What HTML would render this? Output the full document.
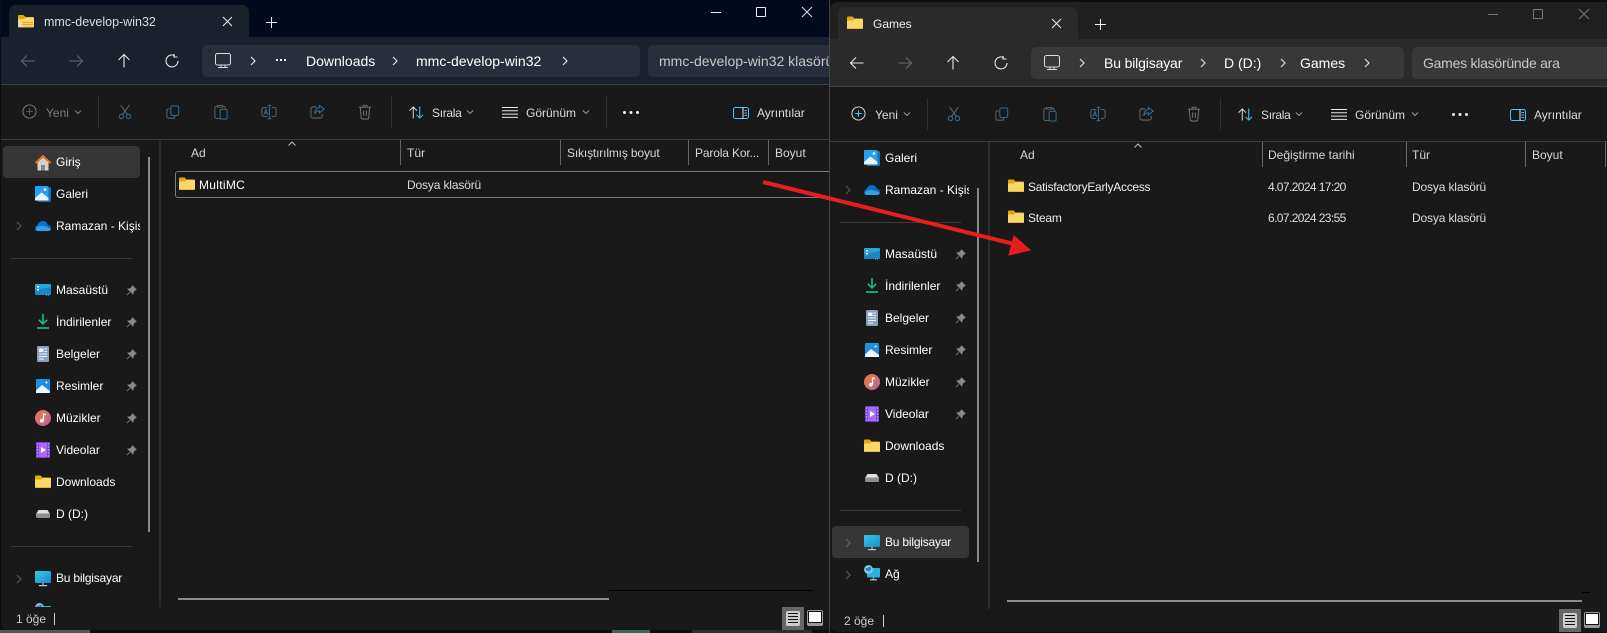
<!DOCTYPE html>
<html><head><meta charset="utf-8"><style>
html,body{margin:0;padding:0;background:#0c0f12}
body{position:relative;width:1607px;height:633px;overflow:hidden;font-family:"Liberation Sans",sans-serif;font-size:12px;color:#fff}
.w{position:absolute;overflow:hidden;background:#191919}
.a{position:absolute}
.t{position:absolute;white-space:nowrap;line-height:16px;height:16px}
.i{position:absolute;overflow:visible}
.n{font-size:14px}
.h{color:#d6d6d6}
.d{color:#ddd}
.g{color:#7c7c7c}
.k{letter-spacing:-.15px}
.dt{letter-spacing:-.6px}
</style></head><body>
<svg width="0" height="0" style="position:absolute"><defs>
<symbol id="back" viewBox="0 0 16 16"><path d="M14.5 8H1.5M7 2.5L1.5 8L7 13.5" fill="none" stroke="currentColor" stroke-width="1.1"/></symbol>
<symbol id="fwd" viewBox="0 0 16 16"><path d="M1.5 8H14.5M9 2.5L14.5 8L9 13.5" fill="none" stroke="currentColor" stroke-width="1.1"/></symbol>
<symbol id="up" viewBox="0 0 16 16"><path d="M8 14.5V1.5M2.5 7L8 1.5L13.5 7" fill="none" stroke="currentColor" stroke-width="1.1"/></symbol>
<symbol id="ref" viewBox="0 0 16 16"><path d="M10.8 2.6A6 6 0 1 0 14 8M10 1V4H13.5" fill="none" stroke="currentColor" stroke-width="1.1"/></symbol>
<symbol id="mon" viewBox="0 0 16 16"><rect x=".5" y=".5" width="15" height="11.5" rx="2" fill="none" stroke="currentColor" stroke-width="1"/><path d="M3 14.5H13M6 12.5V14.5M10 12.5V14.5" stroke="currentColor" stroke-width="1"/></symbol>
<symbol id="chev" viewBox="0 0 8 10"><path d="M2 1L6 5L2 9" fill="none" stroke="currentColor" stroke-width="1.2"/></symbol>
<symbol id="cd" viewBox="0 0 8 6"><path d="M1 1.5L4 4.5L7 1.5" fill="none" stroke="currentColor" stroke-width="1"/></symbol>
<symbol id="plus" viewBox="0 0 16 16"><circle cx="8" cy="8" r="7" fill="none" stroke="currentColor" stroke-width="1"/><path d="M4.5 8H11.5M8 4.5V11.5" stroke="var(--ac)" stroke-width="1.1"/></symbol>
<symbol id="cut" viewBox="0 0 16 18"><path d="M3 1L10.5 11.5M13 1L5.5 11.5" stroke="#666" stroke-width="1.1" fill="none"/><circle cx="4" cy="14" r="2.5" fill="none" stroke="#2f6a94" stroke-width="1.2"/><circle cx="12" cy="14" r="2.5" fill="none" stroke="#2f6a94" stroke-width="1.2"/></symbol>
<symbol id="copy" viewBox="0 0 16 16"><path d="M4 4.5H2.5A1.5 1.5 0 0 0 1 6V13A2 2 0 0 0 3 15H8.5A1.5 1.5 0 0 0 10 13.5V12.500" fill="none" stroke="#666" stroke-width="1.1"/><rect x="5.500" y="1" width="9" height="11" rx="2" fill="none" stroke="#2f6a94" stroke-width="1.2"/></symbol>
<symbol id="paste" viewBox="0 0 16 18"><path d="M7 16.500H3A2 2 0 0 1 1 14.500V4.500A2 2 0 0 1 3 2.500H4M10 2.500H11A2 2 0 0 1 13 4.500V5.500M4 1.500H10V3.500H4Z" fill="none" stroke="#666" stroke-width="1.1"/><rect x="7" y="6" width="8" height="11" rx="1.500" fill="none" stroke="#2f6a94" stroke-width="1.2"/></symbol>
<symbol id="ren" viewBox="0 0 18 16"><path d="M7 3H3A2 2 0 0 0 1 5V11A2 2 0 0 0 3 13H7M12 3H15A2 2 0 0 1 17 5V11A2 2 0 0 1 15 13H12" fill="none" stroke="#666" stroke-width="1.1"/><path d="M7.500 .5H11.500M9.500 .5V15.500M7.500 15.500H11.500" fill="none" stroke="#2f6a94" stroke-width="1.2"/><path d="M3.300 11L5.500 5L7.700 11M4.100 9H6.900" fill="none" stroke="#2f6a94" stroke-width="1.2"/></symbol>
<symbol id="share" viewBox="0 0 16 16"><path d="M7 3H3A2 2 0 0 0 1 5V13A2 2 0 0 0 3 15H11A2 2 0 0 0 13 13V10.500" fill="none" stroke="#666" stroke-width="1.1"/><path d="M10 1.500L15 5.500L10 9.500V7.200C7.500 7.200 6 8.500 5 10.500C5 7 7 4 10 3.800Z" fill="none" stroke="#2f6a94" stroke-width="1.2"/></symbol>
<symbol id="del" viewBox="0 0 14 17"><path d="M.5 3.500H13.500M5 3.500V1.500H9V3.500M2 3.500L3 14.500A1.500 1.500 0 0 0 4.500 16H9.500A1.500 1.500 0 0 0 11 14.500L12 3.500M5.500 7V12.500M8.500 7V12.500" fill="none" stroke="#707070" stroke-width="1.1"/></symbol>
<symbol id="sort" viewBox="0 0 17 14"><path d="M5 13.500V1M1 5L5 1L9 5" fill="none" stroke="#e6e6e6"/><path d="M12 .5V13M8.500 9.500L12 13L15.500 9.500" fill="none" stroke="#4cc2ff" stroke-width="1.100"/></symbol>
<symbol id="view" viewBox="0 0 16 11"><path d="M0 .5H16M0 3.800H16M0 7.100H16M0 10.400H16" stroke="#e6e6e6" stroke-width="1"/></symbol>
<symbol id="det" viewBox="0 0 16 12"><rect x=".5" y=".5" width="15" height="11" rx="2" fill="none" stroke="#4cc2ff"/><path d="M10 .5V11.500" stroke="#e6e6e6"/><path d="M11.500 3.500H14M11.500 6H14M11.500 8.500H14" stroke="#4cc2ff"/></symbol>
<symbol id="pin" viewBox="0 0 12 12"><path d="M7 .8L11.200 5L9.800 5.600L8 7.500L7.600 10L2 4.400L4.500 4L6.400 2.200ZM4 8L1 11" fill="#8a8a8a" stroke="#8a8a8a" stroke-width=".8"/></symbol>
<symbol id="fold" viewBox="0 0 16 13"><path d="M0 1.500A1 1 0 0 1 1 .5H5.500L7.500 2.500H15A1 1 0 0 1 16 3.500V7H0Z" fill="#e6a70e"/><path d="M0 4.500H6L7.500 3H15A1 1 0 0 1 16 4V12A1 1 0 0 1 15 13H1A1 1 0 0 1 0 12Z" fill="#fbd768"/><path d="M0 12H16V12A1 1 0 0 1 15 13H1A1 1 0 0 1 0 12Z" fill="#e9b73e"/></symbol>
<symbol id="home" viewBox="0 0 16 16"><path d="M2.500 7L8 2.500L13.500 7V15.500H2.500Z" fill="#d5d1cd"/><rect x="6" y="10" width="4" height="5.500" fill="#8c8782"/><path d="M.5 8L8 1L15.500 8" fill="none" stroke="#e9701c" stroke-width="2"/></symbol>
<symbol id="gal" viewBox="0 0 16 16"><rect x="2.500" y="1" width="13.500" height="15" rx="1" fill="#1a6fb5"/><rect x="0" y="0" width="13.500" height="14.500" rx="1" fill="#2aa0ea"/><path d="M0 12L6.500 6.500L13.500 12V14.500H0Z" fill="#e8f5fd"/><circle cx="10" cy="3.500" r="1.300" fill="#fff"/></symbol>
<symbol id="cloud" viewBox="0 0 16 10"><path d="M3 10A3 3 0 0 1 2.600 4.100C3.500 1.500 5.500 0 8 0C10.500 0 12.200 1.500 12.800 4A3 3 0 0 1 13 10Z" fill="#0f6fc6"/><path d="M3 10C1.500 10 .5 9 .5 8C1 6.500 3 5 6.500 5C10 5 13 6 16 8C15.600 9.200 14.500 10 13 10Z" fill="#2ea3ec"/></symbol>
<symbol id="desk" viewBox="0 0 16 12"><path d="M1 0H15A1 1 0 0 1 16 1V10A1 1 0 0 1 15 11H1A1 1 0 0 1 0 10V1A1 1 0 0 1 1 0Z" fill="#26a9d8"/><path d="M0 6L16 3V10A1 1 0 0 1 15 11H1A1 1 0 0 1 0 10Z" fill="#1a86c4"/><rect x="2" y="2" width="2" height="1.500" fill="#fff"/><rect x="2" y="5" width="2" height="1.500" fill="#fff"/><rect x="11" y="10.600" width="1" height="1" fill="#aaa"/><rect x="13" y="10.600" width="1" height="1" fill="#aaa"/></symbol>
<symbol id="dl" viewBox="0 0 12 15"><path d="M6 0V9.500M1.800 5.800L6 10L10.200 5.800" fill="none" stroke="#1cc28c" stroke-width="1.500"/><path d="M0 14H12" stroke="#1cc28c" stroke-width="1.600"/></symbol>
<symbol id="doc" viewBox="0 0 12 16"><rect width="12" height="16" rx="1.500" fill="#8aa3bd"/><rect x="2" y="2.500" width="4.500" height="3.500" fill="#f2f5f8"/><path d="M7.500 3H10M7.500 5.500H10M2 8H10M2 10.500H10M2 13H7" stroke="#f2f5f8"/></symbol>
<symbol id="pic" viewBox="0 0 14 14"><rect width="14" height="14" rx="1" fill="#1c8fe0"/><path d="M0 11.500L6 6L14 12V14H0Z" fill="#eef7fd"/><circle cx="10.500" cy="3.500" r="1" fill="#fff"/></symbol>
<symbol id="mus" viewBox="0 0 16 16"><defs><linearGradient id="mg" x1="0" y1="0" x2="1" y2="1"><stop offset="0" stop-color="#ee7b3c"/><stop offset="1" stop-color="#b8609c"/></linearGradient></defs><circle cx="8" cy="8" r="8" fill="url(#mg)"/><path d="M8.500 3.500V10.500" stroke="#fff" stroke-width="1.300"/><path d="M8.500 3.500L11 5" stroke="#fff" stroke-width="1.300"/><circle cx="6.800" cy="10.800" r="1.900" fill="#fff"/></symbol>
<symbol id="vid" viewBox="0 0 14 16"><rect width="14" height="16" rx="1" fill="#7a3fd8"/><rect x="3" y="1" width="8" height="14" fill="#a66bf0"/><path d="M5 5L10 8L5 11Z" fill="#fff"/><path d="M.8 2H2.200M.8 5H2.200M.8 8H2.200M.8 11H2.200M.8 14H2.200M11.800 2H13.200M11.800 5H13.200M11.800 8H13.200M11.800 11H13.200M11.800 14H13.200" stroke="#e7dafc" stroke-width="1"/></symbol>
<symbol id="drv" viewBox="0 0 14 8"><path d="M2.500 0H11.500L14 4H0Z" fill="#e0e0e0"/><rect y="3.500" width="14" height="4.500" rx="1" fill="#8d8d8d"/><rect x="2.500" y="5.200" width="1.400" height="1.200" fill="#3bd26a"/></symbol>
<symbol id="pc" viewBox="0 0 16 16"><defs><linearGradient id="pg" x1="0" y1="0" x2="1" y2="1"><stop offset="0" stop-color="#36c7e6"/><stop offset="1" stop-color="#1490c8"/></linearGradient></defs><rect width="16" height="12" rx="1" fill="url(#pg)"/><rect x="7.200" y="12" width="1.600" height="2.500" fill="#9a9a9a"/><rect x="4" y="14" width="8" height="1.200" fill="#c6c6c6"/></symbol>
<symbol id="net" viewBox="0 0 16 16"><rect x="3" y="3" width="13" height="9.500" rx="1" fill="#25b4e0"/><rect x="8.700" y="12.500" width="1.400" height="2" fill="#9a9a9a"/><rect x="6" y="14.200" width="7" height="1.200" fill="#c6c6c6"/><circle cx="4.500" cy="4.500" r="4.500" fill="#7fc3ea"/><path d="M1.500 2.500C3 4 5 2 6.500 1.500C7 3 8 5 5 6C3 6.500 1.500 5 1.500 2.500Z" fill="#2b80c0"/></symbol>
</defs></svg>

<!-- desktop strip -->
<div class="a" style="left:0;top:630px;width:90px;height:3px;background:#555"></div>
<div class="a" style="left:612px;top:630px;width:38px;height:3px;background:#2f6b5b"></div>
<div class="a" style="left:692px;top:630px;width:120px;height:3px;background:#2e2e28"></div>

<!-- WINDOW 1 -->
<div class="w" style="left:1px;top:0;width:829px;height:630px;border-radius:0 0 0 8px;background:#191919">
<div style="position:absolute;left:-1px;top:0;width:830px;height:630px">
<div class="a" style="left:0;top:0;width:830px;height:37px;background:#010a1f"></div>
<div class="a" style="left:9px;top:5px;width:240px;height:32px;background:#1a202c;border-radius:7px 7px 0 0"></div>
<svg class="i" style="left:18px;top:14px" width="16" height="14"><use href="#fold"/><rect x="1" y="8" width="3" height="5" fill="#ddd"/><rect x="4" y="8" width="11" height="1" fill="#d4a93a"/><rect x="4" y="10" width="11" height="1" fill="#d4a93a"/></svg>
<div class="t d" style="left:44px;top:14px;font-size:12.5px">mmc-develop-win32</div>
<svg class="i" style="left:222px;top:16px" width="11" height="11"><path d="M1 1L10 10M10 1L1 10" stroke="#eee" stroke-width="1"/></svg>
<svg class="i" style="left:266px;top:17px" width="11" height="11"><path d="M0 5.500H11M5.500 0V11" stroke="#eee" stroke-width="1"/></svg>
<div class="a" style="left:711px;top:12px;width:10px;height:1px;background:#eee"></div>
<div class="a" style="left:756px;top:7px;width:8px;height:8px;border:1px solid #eee;border-radius:1px"></div>
<svg class="i" style="left:802px;top:7px" width="10" height="10"><path d="M0 0L10 10M10 0L0 10" stroke="#ddd" stroke-width="1"/></svg>
<div class="a" style="left:0;top:37px;width:830px;height:47px;background:#1a202c"></div>
<div class="a" style="left:0;top:84px;width:830px;height:1px;background:#3d3d3d"></div>
<svg class="i" style="left:20px;top:53px;color:#5e6670" width="16" height="16"><use href="#back"/></svg>
<svg class="i" style="left:68px;top:53px;color:#5e6670" width="16" height="16"><use href="#fwd"/></svg>
<svg class="i" style="left:116px;top:53px;color:#e8e8e8" width="16" height="16"><use href="#up"/></svg>
<svg class="i" style="left:164px;top:53px;color:#e8e8e8" width="16" height="16"><use href="#ref"/></svg>
<div class="a" style="left:202px;top:45px;width:438px;height:32px;background:#282e3a;border-radius:5px"></div>
<svg class="i" style="left:215px;top:53px;color:#ddd" width="16" height="16"><use href="#mon"/></svg>
<svg class="i" style="left:249px;top:56px;color:#ddd" width="8" height="10"><use href="#chev"/></svg>
<div class="a" style="left:276px;top:59px;width:2px;height:2px;background:#eee;box-shadow:4px 0 #eee,8px 0 #eee"></div>
<div class="t n" style="left:306px;top:53px">Downloads</div>
<svg class="i" style="left:391px;top:56px;color:#ddd" width="8" height="10"><use href="#chev"/></svg>
<div class="t n" style="left:416px;top:53px">mmc-develop-win32</div>
<svg class="i" style="left:561px;top:56px;color:#ddd" width="8" height="10"><use href="#chev"/></svg>
<div class="a" style="left:648px;top:45px;width:190px;height:32px;background:#282e3a;border-radius:5px"></div>
<div class="t n" style="left:659px;top:53px;color:#c8c8c8">mmc-develop-win32 klasörü</div>
<!-- command bar -->
<svg class="i" style="left:22px;top:104px;color:#7a7a7a;--ac:#3a5f7d" width="15" height="15"><use href="#plus"/></svg>
<div class="t g" style="left:46px;top:105px">Yeni</div>
<svg class="i" style="left:74px;top:109px;color:#7a7a7a" width="8" height="6"><use href="#cd"/></svg>
<div class="a" style="left:98px;top:96px;width:1px;height:32px;background:#303030"></div>
<svg class="i" style="left:118px;top:104px" width="14" height="16"><use href="#cut"/></svg>
<svg class="i" style="left:166px;top:105px" width="14" height="14"><use href="#copy"/></svg>
<svg class="i" style="left:214px;top:104px" width="14" height="16"><use href="#paste"/></svg>
<svg class="i" style="left:261px;top:104px" width="16" height="16"><use href="#ren"/></svg>
<svg class="i" style="left:310px;top:104px" width="15" height="15"><use href="#share"/></svg>
<svg class="i" style="left:358px;top:104px" width="14" height="16"><use href="#del"/></svg>
<div class="a" style="left:391px;top:96px;width:1px;height:32px;background:#303030"></div>
<svg class="i" style="left:408px;top:106px" width="17" height="13"><use href="#sort"/></svg>
<div class="t d" style="left:432px;top:105px;letter-spacing:-.3px">Sırala</div>
<svg class="i" style="left:466px;top:109px;color:#999" width="8" height="6"><use href="#cd"/></svg>
<svg class="i" style="left:502px;top:107px" width="16" height="11"><use href="#view"/></svg>
<div class="t d" style="left:526px;top:105px">Görünüm</div>
<svg class="i" style="left:582px;top:109px;color:#999" width="8" height="6"><use href="#cd"/></svg>
<div class="a" style="left:606px;top:96px;width:1px;height:32px;background:#303030"></div>
<div class="a" style="left:623px;top:111px;width:3px;height:3px;border-radius:2px;background:#eee;box-shadow:6.500px 0 #eee,13px 0 #eee"></div>
<svg class="i" style="left:733px;top:107px" width="16" height="12"><use href="#det"/></svg>
<div class="t d" style="left:757px;top:105px">Ayrıntılar</div>
<div class="a" style="left:0;top:139px;width:830px;height:1px;background:#3d3d3d"></div>
<!-- sidebar -->
<div class="a" style="left:3px;top:146px;width:137px;height:32px;background:#363636;border-radius:4px"></div>
<svg class="i" style="left:35px;top:155px" width="16" height="16"><use href="#home"/></svg><div class="t" style="left:56px;top:154px">Giriş</div>
<svg class="i" style="left:35px;top:186px" width="16" height="16"><use href="#gal"/></svg><div class="t" style="left:56px;top:186px">Galeri</div>
<svg class="i" style="left:15px;top:221px;color:#555" width="8" height="10"><use href="#chev"/></svg>
<svg class="i" style="left:35px;top:221px" width="16" height="10"><use href="#cloud"/></svg><div class="t" style="left:56px;top:218px;width:84px;overflow:hidden">Ramazan - Kişisel</div>
<div class="a" style="left:11px;top:258px;width:121px;height:1px;background:#3a3a3a"></div>
<svg class="i" style="left:35px;top:284px" width="16" height="12"><use href="#desk"/></svg><div class="t" style="left:56px;top:282px">Masaüstü</div><svg class="i" style="left:126px;top:285px" width="11" height="11"><use href="#pin"/></svg>
<svg class="i" style="left:37px;top:314px" width="12" height="15"><use href="#dl"/></svg><div class="t" style="left:56px;top:314px">İndirilenler</div><svg class="i" style="left:126px;top:317px" width="11" height="11"><use href="#pin"/></svg>
<svg class="i" style="left:37px;top:346px" width="12" height="16"><use href="#doc"/></svg><div class="t" style="left:56px;top:346px">Belgeler</div><svg class="i" style="left:126px;top:349px" width="11" height="11"><use href="#pin"/></svg>
<svg class="i" style="left:36px;top:379px" width="14" height="14"><use href="#pic"/></svg><div class="t" style="left:56px;top:378px">Resimler</div><svg class="i" style="left:126px;top:381px" width="11" height="11"><use href="#pin"/></svg>
<svg class="i" style="left:35px;top:410px" width="16" height="16"><use href="#mus"/></svg><div class="t" style="left:56px;top:410px">Müzikler</div><svg class="i" style="left:126px;top:413px" width="11" height="11"><use href="#pin"/></svg>
<svg class="i" style="left:36px;top:442px" width="14" height="16"><use href="#vid"/></svg><div class="t" style="left:56px;top:442px">Videolar</div><svg class="i" style="left:126px;top:445px" width="11" height="11"><use href="#pin"/></svg>
<svg class="i" style="left:35px;top:475px" width="16" height="13"><use href="#fold"/></svg><div class="t" style="left:56px;top:474px">Downloads</div>
<svg class="i" style="left:36px;top:510px" width="14" height="8"><use href="#drv"/></svg><div class="t" style="left:56px;top:506px">D (D:)</div>
<div class="a" style="left:11px;top:546px;width:121px;height:1px;background:#3a3a3a"></div>
<svg class="i" style="left:15px;top:574px;color:#555" width="8" height="10"><use href="#chev"/></svg>
<svg class="i" style="left:35px;top:571px" width="16" height="16"><use href="#pc"/></svg><div class="t" style="left:56px;top:570px;letter-spacing:-.2px">Bu bilgisayar</div>
<svg class="i" style="left:35px;top:603px" width="16" height="16"><use href="#net"/></svg>
<div class="a" style="left:148px;top:157px;width:2px;height:375px;background:#8a8a8a"></div>
<div class="a" style="left:159px;top:140px;width:2px;height:467px;background:#2c2c2c"></div>
<!-- list -->
<div class="a" style="left:288px;top:141px"><svg width="8" height="5" style="display:block"><path d="M.5 4.500L4 1L7.500 4.500" fill="none" stroke="#bbb"/></svg></div>
<div class="t h" style="left:191px;top:145px">Ad</div>
<div class="a" style="left:400px;top:140px;width:1px;height:25px;background:#666"></div>
<div class="t h" style="left:407px;top:145px">Tür</div>
<div class="a" style="left:560px;top:140px;width:1px;height:25px;background:#666"></div>
<div class="t h k" style="left:567px;top:145px">Sıkıştırılmış boyut</div>
<div class="a" style="left:688px;top:140px;width:1px;height:25px;background:#666"></div>
<div class="t h k" style="left:695px;top:145px">Parola Kor...</div>
<div class="a" style="left:768px;top:140px;width:1px;height:25px;background:#666"></div>
<div class="t h" style="left:775px;top:145px">Boyut</div>
<div class="a" style="left:175px;top:171px;width:670px;height:25px;border:1px solid #7d7d7d;border-radius:3px"></div>
<svg class="i" style="left:179px;top:177px" width="16" height="13"><use href="#fold"/></svg>
<div class="t" style="left:199px;top:177px;letter-spacing:.3px">MultiMC</div>
<div class="t d k" style="left:407px;top:177px">Dosya klasörü</div>
<!-- hscroll -->
<div class="a" style="left:178px;top:598px;width:431px;height:2px;background:#8c8c8c"></div>
<div class="a" style="left:609px;top:590px;width:204px;height:1px;background:#000"></div>
<!-- status -->
<div class="a" style="left:0;top:607px;width:830px;height:23px;background:#191919"></div>
<div class="t" style="left:16px;top:611px;color:#ccc">1 öğe</div>
<div class="a" style="left:54px;top:613px;width:1px;height:12px;background:#ccc"></div>
<div class="a" style="left:782px;top:607px;width:22px;height:23px;background:#666"></div>
<div class="a" style="left:786px;top:611px;width:14px;height:15px;background:#ccc;border-radius:2px"></div>
<svg class="i" style="left:788px;top:613px" width="10" height="11"><path d="M0 .5H10M0 3.500H10M0 6.500H10M0 9.500H10" stroke="#111"/></svg>
<div class="a" style="left:807px;top:610px;width:16px;height:16px;background:#999;border-radius:2px"></div>
<div class="a" style="left:809px;top:612px;width:12px;height:10px;background:#fff;outline:1px solid #111"></div>
</div></div>
<div class="a" style="left:829px;top:0;width:1px;height:633px;background:#444"></div>

<!-- WINDOW 2 -->
<div class="w" style="left:830px;top:2px;width:777px;height:630px;border-radius:8px 0 0 8px;background:#191919">
<div style="position:absolute;left:-1px;top:0;width:778px;height:630px">
<div class="a" style="left:0;top:0;width:778px;height:37px;background:#202020"></div>
<div class="a" style="left:9px;top:5px;width:240px;height:32px;background:#2a2a2a;border-radius:7px 7px 0 0"></div>
<svg class="i" style="left:18px;top:14px" width="16" height="13"><use href="#fold"/></svg>
<div class="t" style="left:44px;top:14px;font-size:12px;color:#eee">Games</div>
<svg class="i" style="left:222px;top:16px" width="11" height="11"><path d="M1 1L10 10M10 1L1 10" stroke="#eee" stroke-width="1"/></svg>
<svg class="i" style="left:266px;top:17px" width="11" height="11"><path d="M0 5.500H11M5.500 0V11" stroke="#eee" stroke-width="1"/></svg>
<div class="a" style="left:659px;top:12px;width:10px;height:1px;background:#777"></div>
<div class="a" style="left:704px;top:7px;width:8px;height:8px;border:1px solid #777;border-radius:1px"></div>
<svg class="i" style="left:750px;top:7px" width="10" height="10"><path d="M0 0L10 10M10 0L0 10" stroke="#777" stroke-width="1"/></svg>
<div class="a" style="left:0;top:37px;width:778px;height:47px;background:#2a2a2a"></div>
<div class="a" style="left:0;top:84px;width:778px;height:1px;background:#444"></div>
<svg class="i" style="left:20px;top:53px;color:#e8e8e8" width="16" height="16"><use href="#back"/></svg>
<svg class="i" style="left:68px;top:53px;color:#6a6a6a" width="16" height="16"><use href="#fwd"/></svg>
<svg class="i" style="left:116px;top:53px;color:#e8e8e8" width="16" height="16"><use href="#up"/></svg>
<svg class="i" style="left:164px;top:53px;color:#e8e8e8" width="16" height="16"><use href="#ref"/></svg>
<div class="a" style="left:202px;top:45px;width:373px;height:32px;background:#383838;border-radius:5px"></div>
<svg class="i" style="left:215px;top:53px;color:#ddd" width="16" height="16"><use href="#mon"/></svg>
<svg class="i" style="left:249px;top:56px;color:#ddd" width="8" height="10"><use href="#chev"/></svg>
<div class="t n" style="left:275px;top:53px;letter-spacing:-.15px">Bu bilgisayar</div>
<svg class="i" style="left:370px;top:56px;color:#ddd" width="8" height="10"><use href="#chev"/></svg>
<div class="t n" style="left:395px;top:53px">D (D:)</div>
<svg class="i" style="left:450px;top:56px;color:#ddd" width="8" height="10"><use href="#chev"/></svg>
<div class="t n" style="left:471px;top:53px">Games</div>
<svg class="i" style="left:534px;top:56px;color:#ddd" width="8" height="10"><use href="#chev"/></svg>
<div class="a" style="left:583px;top:45px;width:200px;height:32px;background:#383838;border-radius:5px"></div>
<div class="t n" style="left:594px;top:53px;color:#c8c8c8;letter-spacing:-.25px">Games klasöründe ara</div>
<!-- command bar -->
<svg class="i" style="left:22px;top:104px;color:#dcdcdc;--ac:#4cc2ff" width="15" height="15"><use href="#plus"/></svg>
<div class="t d" style="left:46px;top:105px">Yeni</div>
<svg class="i" style="left:74px;top:109px;color:#999" width="8" height="6"><use href="#cd"/></svg>
<div class="a" style="left:98px;top:96px;width:1px;height:32px;background:#303030"></div>
<svg class="i" style="left:118px;top:104px" width="14" height="16"><use href="#cut"/></svg>
<svg class="i" style="left:166px;top:105px" width="14" height="14"><use href="#copy"/></svg>
<svg class="i" style="left:214px;top:104px" width="14" height="16"><use href="#paste"/></svg>
<svg class="i" style="left:261px;top:104px" width="16" height="16"><use href="#ren"/></svg>
<svg class="i" style="left:310px;top:104px" width="15" height="15"><use href="#share"/></svg>
<svg class="i" style="left:358px;top:104px" width="14" height="16"><use href="#del"/></svg>
<div class="a" style="left:391px;top:96px;width:1px;height:32px;background:#303030"></div>
<svg class="i" style="left:408px;top:106px" width="17" height="13"><use href="#sort"/></svg>
<div class="t d" style="left:432px;top:105px;letter-spacing:-.3px">Sırala</div>
<svg class="i" style="left:466px;top:109px;color:#999" width="8" height="6"><use href="#cd"/></svg>
<svg class="i" style="left:502px;top:107px" width="16" height="11"><use href="#view"/></svg>
<div class="t d" style="left:526px;top:105px">Görünüm</div>
<svg class="i" style="left:582px;top:109px;color:#999" width="8" height="6"><use href="#cd"/></svg>
<div class="a" style="left:623px;top:111px;width:3px;height:3px;border-radius:2px;background:#eee;box-shadow:6.500px 0 #eee,13px 0 #eee"></div>
<svg class="i" style="left:681px;top:107px" width="16" height="12"><use href="#det"/></svg>
<div class="t d" style="left:705px;top:105px">Ayrıntılar</div>
<div class="a" style="left:0;top:139px;width:778px;height:1px;background:#3d3d3d"></div>
<!-- sidebar -->
<svg class="i" style="left:35px;top:148px" width="16" height="16"><use href="#gal"/></svg><div class="t" style="left:56px;top:148px">Galeri</div>
<svg class="i" style="left:15px;top:183px;color:#555" width="8" height="10"><use href="#chev"/></svg>
<svg class="i" style="left:35px;top:183px" width="16" height="10"><use href="#cloud"/></svg><div class="t" style="left:56px;top:180px;width:84px;overflow:hidden">Ramazan - Kişisel</div>
<div class="a" style="left:11px;top:220px;width:121px;height:1px;background:#3a3a3a"></div>
<svg class="i" style="left:35px;top:246px" width="16" height="12"><use href="#desk"/></svg><div class="t" style="left:56px;top:244px">Masaüstü</div><svg class="i" style="left:126px;top:247px" width="11" height="11"><use href="#pin"/></svg>
<svg class="i" style="left:37px;top:276px" width="12" height="15"><use href="#dl"/></svg><div class="t" style="left:56px;top:276px">İndirilenler</div><svg class="i" style="left:126px;top:279px" width="11" height="11"><use href="#pin"/></svg>
<svg class="i" style="left:37px;top:308px" width="12" height="16"><use href="#doc"/></svg><div class="t" style="left:56px;top:308px">Belgeler</div><svg class="i" style="left:126px;top:311px" width="11" height="11"><use href="#pin"/></svg>
<svg class="i" style="left:36px;top:341px" width="14" height="14"><use href="#pic"/></svg><div class="t" style="left:56px;top:340px">Resimler</div><svg class="i" style="left:126px;top:343px" width="11" height="11"><use href="#pin"/></svg>
<svg class="i" style="left:35px;top:372px" width="16" height="16"><use href="#mus"/></svg><div class="t" style="left:56px;top:372px">Müzikler</div><svg class="i" style="left:126px;top:375px" width="11" height="11"><use href="#pin"/></svg>
<svg class="i" style="left:36px;top:404px" width="14" height="16"><use href="#vid"/></svg><div class="t" style="left:56px;top:404px">Videolar</div><svg class="i" style="left:126px;top:407px" width="11" height="11"><use href="#pin"/></svg>
<svg class="i" style="left:35px;top:437px" width="16" height="13"><use href="#fold"/></svg><div class="t" style="left:56px;top:436px">Downloads</div>
<svg class="i" style="left:36px;top:472px" width="14" height="8"><use href="#drv"/></svg><div class="t" style="left:56px;top:468px">D (D:)</div>
<div class="a" style="left:11px;top:508px;width:121px;height:1px;background:#3a3a3a"></div>
<div class="a" style="left:3px;top:524px;width:137px;height:32px;background:#363636;border-radius:4px"></div>
<svg class="i" style="left:15px;top:536px;color:#666" width="8" height="10"><use href="#chev"/></svg>
<svg class="i" style="left:35px;top:533px" width="16" height="16"><use href="#pc"/></svg><div class="t" style="left:56px;top:532px;letter-spacing:-.2px">Bu bilgisayar</div>
<svg class="i" style="left:15px;top:568px;color:#555" width="8" height="10"><use href="#chev"/></svg>
<svg class="i" style="left:35px;top:563px" width="16" height="16"><use href="#net"/></svg><div class="t" style="left:56px;top:564px">Ağ</div>
<div class="a" style="left:148px;top:186px;width:2px;height:374px;background:#8a8a8a"></div>
<div class="a" style="left:159px;top:140px;width:2px;height:467px;background:#2c2c2c"></div>
<!-- list -->
<div class="a" style="left:305px;top:141px"><svg width="8" height="5" style="display:block"><path d="M.5 4.500L4 1L7.500 4.500" fill="none" stroke="#bbb"/></svg></div>
<div class="t h" style="left:191px;top:145px">Ad</div>
<div class="a" style="left:433px;top:140px;width:1px;height:25px;background:#666"></div>
<div class="t h" style="left:439px;top:145px">Değiştirme tarihi</div>
<div class="a" style="left:577px;top:140px;width:1px;height:25px;background:#666"></div>
<div class="t h" style="left:583px;top:145px">Tür</div>
<div class="a" style="left:696px;top:140px;width:1px;height:25px;background:#666"></div>
<div class="t h" style="left:703px;top:145px">Boyut</div>
<div class="a" style="left:776px;top:140px;width:1px;height:25px;background:#666"></div>
<svg class="i" style="left:179px;top:177px" width="16" height="13"><use href="#fold"/></svg>
<div class="t" style="left:199px;top:177px;color:#eee;letter-spacing:-.28px">SatisfactoryEarlyAccess</div>
<div class="t d dt" style="left:439px;top:177px">4.07.2024 17:20</div>
<div class="t d k" style="left:583px;top:177px">Dosya klasörü</div>
<svg class="i" style="left:179px;top:208px" width="16" height="13"><use href="#fold"/></svg>
<div class="t" style="left:199px;top:208px;color:#eee;letter-spacing:-.2px">Steam</div>
<div class="t d dt" style="left:439px;top:208px">6.07.2024 23:55</div>
<div class="t d k" style="left:583px;top:208px">Dosya klasörü</div>
<!-- hscroll -->
<div class="a" style="left:178px;top:598px;width:575px;height:2px;background:#8c8c8c"></div>
<div class="a" style="left:753px;top:590px;width:8px;height:1px;background:#000"></div>
<!-- status -->
<div class="a" style="left:0;top:607px;width:778px;height:23px;background:#191919"></div>
<div class="t" style="left:15px;top:611px;color:#ccc">2 öğe</div>
<div class="a" style="left:54px;top:613px;width:1px;height:12px;background:#ccc"></div>
<div class="a" style="left:730px;top:607px;width:22px;height:23px;background:#666"></div>
<div class="a" style="left:734px;top:611px;width:14px;height:15px;background:#ccc;border-radius:2px"></div>
<svg class="i" style="left:736px;top:613px" width="10" height="11"><path d="M0 .5H10M0 3.500H10M0 6.500H10M0 9.500H10" stroke="#111"/></svg>
<div class="a" style="left:755px;top:610px;width:16px;height:16px;background:#999;border-radius:2px"></div>
<div class="a" style="left:757px;top:612px;width:12px;height:10px;background:#fff;outline:1px solid #111"></div>
</div></div>

<!-- red arrow -->
<svg class="i" style="left:0;top:0" width="1607" height="633"><path d="M763 182L1014 244" stroke="#e81d1d" stroke-width="4" fill="none"/><path d="M1030 250L1009 255L1014 236Z" fill="#e81d1d" stroke="#e81d1d" stroke-width="1"/></svg>
</body></html>
